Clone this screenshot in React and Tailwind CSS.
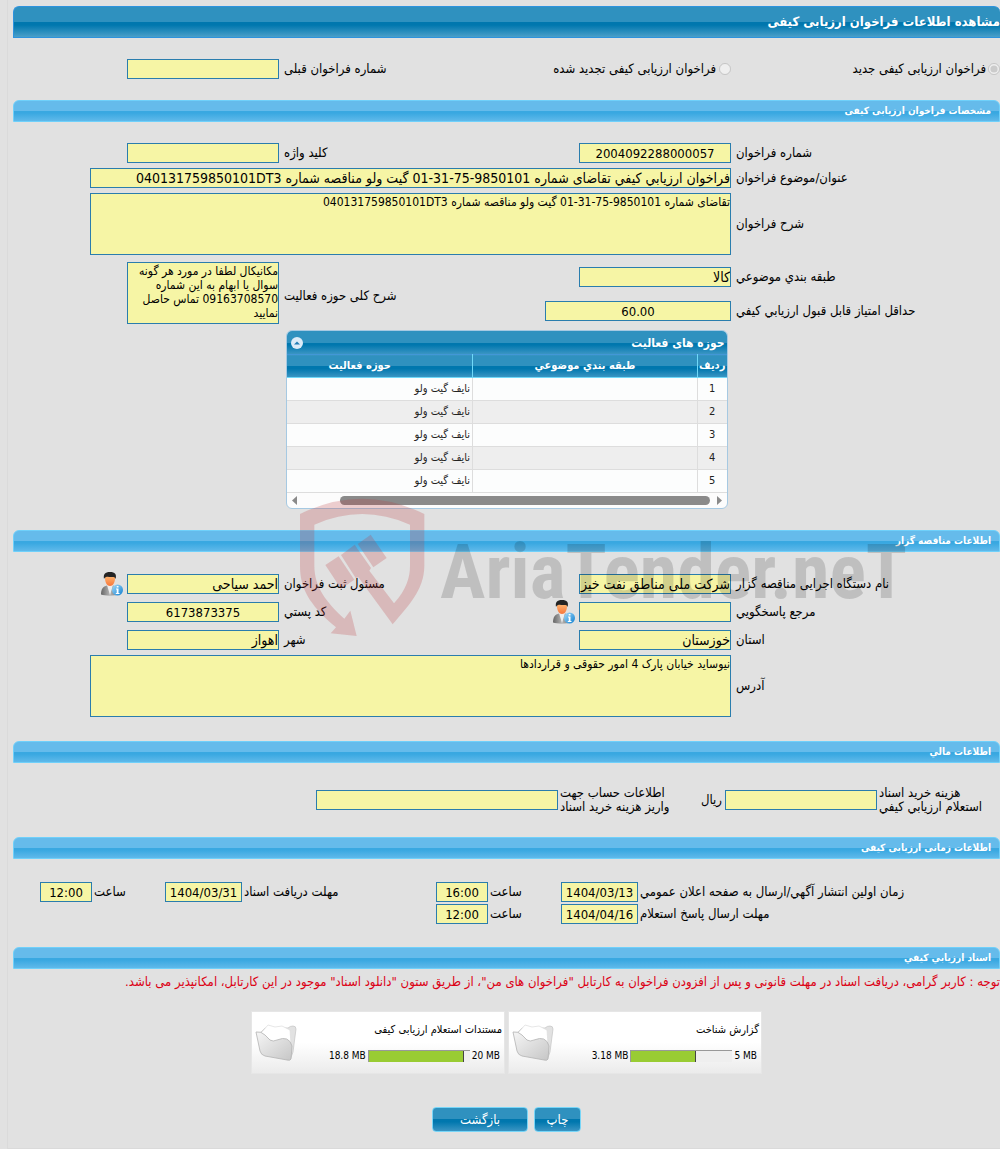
import { useId, useState } from "react"
import clsx from "clsx"

const formGrid="grid grid-cols-[269fr_152px_300fr_152px_114fr] items-center"
const financeGrid="grid grid-cols-[123fr_152px_167fr_242px_303fr] items-center"
const timeGrid="grid grid-cols-[362fr_77px_73fr_52px_194fr_77px_73fr_52px_27fr] items-center gap-y-0.5"
const darkBar="bg-[linear-gradient(#2f91bf_0%,#2f91bf_50%,#0077ae_50%,#0077ae_60%,#3a95c3_100%)]"

const activities=[1,2,3,4,5].map((row)=>({row,category:"",name:"نایف گیت ولو"}))

const files=[
    {title:"گزارش شناخت",used:3.18,max:5},
    {title:"مستندات استعلام ارزیابی کیفی",used:18.8,max:20},
]

const Section=({title,children,className})=>{
    return (
        <section>
            <h2 className="h-[22px] rounded-t-md border border-[#6fd0fa] bg-[linear-gradient(#65bbeb_0%,#65bbeb_50%,#39a8e1_50%,#39a8e1_60%,#5fb9ea_100%)] px-2 text-[10px]/5 font-bold text-white">{title}</h2>
            <div className={className}>{children}</div>
        </section>
    )
}

const Field=({label,value="",center,multiline,width="w-full",labelClass="pl-[5px]",icon,unit})=>{
    const id=useId()
    return (
        <>
            <div className={clsx("flex items-center justify-between",labelClass)}>
                <span>{unit}</span>
                <label htmlFor={id} className="whitespace-pre-line text-left">{label}</label>
            </div>
            <div className={clsx("flex items-center gap-1",multiline && "self-start")}>
                {
                    multiline?
                    <textarea id={id} readOnly defaultValue={value} className={clsx("block h-[62px] shrink-0 resize-none overflow-hidden border border-[#2a7dad] bg-[#f6f5a5] p-0 pt-px text-xs/[14px] outline-none",width)}/>:
                    <input id={id} type="text" readOnly defaultValue={value} dir={center?"ltr":"rtl"} className={clsx("h-5 shrink-0 border border-[#2a7dad] bg-[#f6f5a5] p-0 outline-none",width,center?"text-center text-[13px]":"text-sm")}/>
                }
                {icon && <PersonIcon/>}
            </div>
        </>
    )
}

const PersonIcon=()=>{
    return (
        <svg viewBox="0 0 22 24" className="-my-0.5 h-6 w-[22px] shrink-0">
            <defs>
                <linearGradient id="suit" x1="0" x2="1"><stop offset="0" stopColor="#666"/><stop offset=".5" stopColor="#b5b5b5"/><stop offset="1" stopColor="#666"/></linearGradient>
                <linearGradient id="face" x1="0" x2="0" y1="0" y2="1"><stop offset="0" stopColor="#ffc27a"/><stop offset="1" stopColor="#f8763a"/></linearGradient>
                <linearGradient id="info" x1="0" x2="1" y1="0" y2="1"><stop offset="0" stopColor="#a5dcfb"/><stop offset="1" stopColor="#0f7fd0"/></linearGradient>
            </defs>
            <path d="M0 22.500C0 17 2 14.500 6 13.500H12C16 14.500 18 17 18 22.500C13 24 4 24 0 22.500Z" fill="url(#suit)"/>
            <path d="M6 13L9 23L12 13Z" fill="#eee"/>
            <path d="M4 6C4 3 6 2 9 2S14 3 14 6C14 10.500 12 14 9 14S4 10.500 4 6Z" fill="url(#face)"/>
            <path d="M3 7C2 2.500 4 0 9 0S16 2.500 14.500 7C14 5.500 13.500 4.800 12 5C9 5.500 7 4 5 5C4 5.500 3.500 6 3 7Z" fill="#242424"/>
            <circle cx="16.500" cy="18" r="5.500" fill="url(#info)"/>
            <path d="M15 16.500H17.500V21H18.500V22H14.800V21H15.700V17.500H15ZM15.700 14H17.500V15.600H15.700Z" fill="#fff"/>
        </svg>
    )
}

const FolderIcon=()=>{
    return (
        <svg viewBox="0 0 42 38" className="h-[38px] w-[42px] shrink-0">
            <defs>
                <linearGradient id="folder" x1="0" x2="1" y1="0" y2="1"><stop offset="0" stopColor="#f6f6f6"/><stop offset="1" stopColor="#c6c6c6"/></linearGradient>
            </defs>
            <path d="M5 9L10 4L33 4Q35 2 38 2Q41 2 41 5L38 28L35 36Z" fill="#e2e2e2" stroke="#c4c4c4" strokeWidth=".7"/>
            <path d="M6 9L13 1L20 3L27 2L35 6L36 20L20 20Z" fill="#fff" stroke="#dcdcdc" strokeWidth=".7"/>
            <path d="M1 8Q6 7 10 11L15 16Q18 18 22 16Q34 11 37 22L36 35Q35 37 32 36L10 32Q6 31 5 27Z" fill="url(#folder)" stroke="#b2b2b2" strokeWidth=".8"/>
        </svg>
    )
}

const ActivityTable=()=>{
    const [open,setOpen]=useState(true)

    return (
        <div className="mx-auto w-[442px] max-w-full overflow-hidden rounded-md border border-[#a6c9e2] bg-[#fcfcfc] text-[11px]">
            <div className={clsx("flex h-[23px] items-center justify-between pr-0.5 pl-1 font-bold text-white",darkBar)}>
                <span className="text-xs">حوزه های فعالیت</span>
                <button type="button" aria-label="toggle" onClick={()=> setOpen(!open)} className="flex size-3 items-center justify-center rounded-full bg-[#dcebf8]">
                    <svg viewBox="0 0 8 8" className="size-2"><path d="M1 5.500L4 2.500L7 5.500Z" fill="#217db5"/></svg>
                </button>
            </div>
            {
                open && <>
                    <div className="overflow-hidden">
                        <table className="w-[479px] table-fixed border-collapse">
                            <colgroup>
                                <col className="w-[29px]"/>
                                <col className="w-[225px]"/>
                                <col className="w-[225px]"/>
                            </colgroup>
                            <thead>
                                <tr className={clsx("h-[23px] border-t border-b border-t-[#4297d7] border-b-[#6fd8f8] text-white",darkBar)}>
                                    <th className="border-l border-[#6fd8f8] p-0">ردیف</th>
                                    <th className="border-l border-[#6fd8f8] p-0">طبقه بندي موضوعي</th>
                                    <th className="p-0">حوزه فعالیت</th>
                                </tr>
                            </thead>
                            <tbody>
                                {
                                    activities.map((item)=>(
                                        <tr key={item.row} className="h-[23px] border-b border-[#ddd] text-[#222] odd:bg-[#fcfdfd] even:bg-[#eee]">
                                            <td className="border-l border-[#ddd] p-0 text-center">{item.row}</td>
                                            <td className="border-l border-[#ddd] px-0.5 py-0">{item.category}</td>
                                            <td className="px-0.5 py-0">{item.name}</td>
                                        </tr>
                                    ))
                                }
                            </tbody>
                        </table>
                    </div>
                    <div className="flex h-[15px] items-center gap-1.5 px-1">
                        <svg viewBox="0 0 7 9" className="h-[9px] w-[7px]"><path d="M1 0L6 4.500L1 9Z" fill="#8a8a8a"/></svg>
                        <div className="h-[9px] w-[370px] rounded-full bg-[#8a8a8a]"></div>
                        <svg viewBox="0 0 7 9" className="mr-auto h-[9px] w-[7px]"><path d="M6 0L1 4.500L6 9Z" fill="#8a8a8a"/></svg>
                    </div>
                </>
            }
        </div>
    )
}

const FileCard=({file})=>{
    return (
        <div className="flex h-[63px] w-[254px] items-center justify-between border border-[#e6e6e6] bg-linear-to-b from-white from-50% to-[#ebebeb] pr-0.5 pl-[3px]">
            <div className="flex flex-col gap-2.5">
                <p className="text-[11px]/4">{file.title}</p>
                <div className="flex items-center gap-0.5 pr-0.5 text-[10px]/4">
                    <span dir="ltr">{file.max} MB</span>
                    <div dir="ltr" role="meter" aria-label={file.title} aria-valuenow={file.used} aria-valuemax={file.max} className="h-3 w-[102px] border-t border-l border-[#999] bg-[#efefef]">
                        <div className="h-full border-r border-[#444] bg-[#9c3]" style={{width:`${file.used/file.max*100}%`}}></div>
                    </div>
                    <span dir="ltr">{file.used} MB</span>
                </div>
            </div>
            <FolderIcon/>
        </div>
    )
}

const Watermark=()=>{
    return (
        <div dir="ltr" className="pointer-events-none absolute -top-9 left-[277px] flex items-start">
            <svg viewBox="0 0 450 450" className="size-[150px]" fill="#be3a40" fillOpacity=".24">
                <path d="M30 60Q216 -32 403 60V215C403 290 350 340 308 391L205 250L197 252L153 183L194 152L243 222L238 230L312 328C350 285 360 250 360 215V92Q216 28 73 92V215C73 280 110 325 163 374L181 350L200 426L122 418L138 400C55 330 30 280 30 215Z"/>
                <path d="M203 150L242 122L290 192L250 220ZM106 213L146 187L193 257L153 284Z"/>
            </svg>
            <span className="pt-7 font-['Liberation_Sans_Narrow','Roboto_Condensed','Liberation_Sans',sans-serif] text-[76px]/[100px] font-bold text-black/15">AriaTender.neT</span>
        </div>
    )
}

export default function App(){
    return (
        <div className="min-h-screen bg-[#e1e1e1] pl-[7px] font-['DejaVu_Sans_Condensed','DejaVu_Sans',sans-serif] text-[13px]/[14px] text-black" dir="rtl">
            <main className="border-b border-l border-[#dadada] pt-1.5 pb-4 pl-[5px]">
                <h1 className="h-8 rounded-t-md border border-r-0 border-[#2d93de] bg-[linear-gradient(#2f91bf_0%,#2f91bf_50%,#0077ae_50%,#0077ae_60%,#4a9fc9_100%)] text-[13px]/[30px] font-bold text-white">مشاهده اطلاعات فراخوان ارزیابی کیفی</h1>

                <div className={clsx("py-[21px]",formGrid)}>
                    <label className="flex items-center gap-0.5">
                        <input type="radio" name="kind" defaultChecked disabled className="size-3"/>
                        فراخوان ارزیابی کیفی جدید
                    </label>
                    <div className="col-span-4 grid grid-cols-subgrid items-center">
                        <label className="col-span-1 flex items-center gap-[3px] whitespace-nowrap">
                            <input type="radio" name="kind" disabled className="size-3 shrink-0"/>
                            فراخوان ارزیابی کیفی تجدید شده
                        </label>
                        <Field label="شماره فراخوان قبلی"/>
                    </div>
                </div>

                <Section title="مشخصات فراخوان ارزیابی کیفی" className="flex flex-col gap-[5px] py-[21px]">
                    <div className={formGrid}>
                        <Field label="شماره فراخوان" value="2004092288000057" center/>
                        <Field label="کلید واژه"/>
                    </div>
                    <div className={formGrid}>
                        <Field label="عنوان/موضوع فراخوان" value="فراخوان ارزیابي کیفي تقاضای شماره 9850101-75-31-01 گیت ولو مناقصه شماره 040131759850101DT3" width="w-[641px]"/>
                    </div>
                    <div className={formGrid}>
                        <Field label="شرح فراخوان" value="تقاضای شماره 9850101-75-31-01 گیت ولو مناقصه شماره 040131759850101DT3" width="w-[641px]" multiline/>
                    </div>
                    <div className="pt-0.5">
                        <div className="grid grid-cols-[269fr_152px_300fr_152px_114fr]">
                            <div className="col-span-2 grid grid-cols-subgrid grid-rows-[30px_38px] items-center">
                                <Field label="طبقه بندي موضوعي" value="کالا"/>
                                <Field label="حداقل امتیاز قابل قبول ارزیابي کیفي" value="60.00" width="w-[186px]" center/>
                            </div>
                            <div className="col-span-2 grid grid-cols-subgrid">
                                <Field label="شرح کلی حوزه فعالیت" value="مکانیکال لطفا در مورد هر گونه سوال یا ابهام به این شماره 09163708570 تماس حاصل نمایید" multiline/>
                            </div>
                        </div>
                        <ActivityTable/>
                    </div>
                </Section>

                <div className="relative">
                    <Section title="اطلاعات مناقصه گزار" className="flex flex-col gap-2 pt-[22px] pb-6">
                        <div className={formGrid}>
                            <Field label="نام دستگاه اجرایی مناقصه گزار" value="شرکت ملی مناطق نفت خیز جنوب"/>
                            <Field label="مسئول ثبت فراخوان" value="احمد سیاحی" icon/>
                        </div>
                        <div className={formGrid}>
                            <Field label="مرجع پاسخگویي" icon/>
                            <Field label="کد پستي" value="6173873375" center/>
                        </div>
                        <div className="flex flex-col gap-[5px]">
                            <div className={formGrid}>
                                <Field label="استان" value="خوزستان"/>
                                <Field label="شهر" value="اهواز"/>
                            </div>
                            <div className={formGrid}>
                                <Field label="آدرس" value="نیوساید خیابان پارک 4 امور حقوقی و قراردادها" width="w-[641px]" multiline/>
                            </div>
                        </div>
                    </Section>
                    <Watermark/>
                </div>

                <Section title="اطلاعات مالي" className={clsx("py-[23px]",financeGrid)}>
                    <Field label={"هزینه خرید اسناد\nاستعلام ارزیابي کیفي"} labelClass="pl-0.5"/>
                    <Field label={"اطلاعات حساب جهت\nواریز هزینه خرید اسناد"} labelClass="pl-0.5 pr-[3px]" unit="ریال"/>
                </Section>

                <Section title="اطلاعات زمانی ارزیابی کیفی" className={clsx("py-[23px]",timeGrid)}>
                    <Field label="زمان اولین انتشار آگهي/ارسال به صفحه اعلان عمومي" value="1404/03/13" labelClass="pl-0.5" center/>
                    <Field label="ساعت" value="16:00" labelClass="pl-0.5" center/>
                    <Field label="مهلت دریافت اسناد" value="1404/03/31" labelClass="pl-0.5" center/>
                    <Field label="ساعت" value="12:00" labelClass="pl-0.5" center/>
                    <div className="col-span-5 col-start-1 grid grid-cols-subgrid">
                        <Field label="مهلت ارسال پاسخ استعلام" value="1404/04/16" labelClass="pl-0.5" center/>
                        <Field label="ساعت" value="12:00" labelClass="pl-0.5" center/>
                    </div>
                </Section>

                <Section title="اسناد ارزیابي کیفي">
                    <p className="py-1.5 text-[#dc0014]">توجه : کاربر گرامی، دریافت اسناد در مهلت قانونی و پس از افزودن فراخوان به کارتابل "فراخوان های من"، از طریق ستون "دانلود اسناد" موجود در این کارتابل، امکانپذیر می باشد.</p>
                    <div className="mt-4 flex flex-wrap justify-center gap-[3px]">
                        {
                            files.map((file)=>(
                                <FileCard key={file.title} file={file}/>
                            ))
                        }
                    </div>
                </Section>

                <div className="mt-[33px] flex justify-center gap-1.5 text-[13px] text-white">
                    <button type="button" className={clsx("h-[25px] w-[47px] rounded border border-[#77d5f7]",darkBar)}>چاپ</button>
                    <button type="button" className={clsx("h-[25px] w-24 rounded border border-[#77d5f7]",darkBar)}>بازگشت</button>
                </div>
            </main>
        </div>
    )
}
